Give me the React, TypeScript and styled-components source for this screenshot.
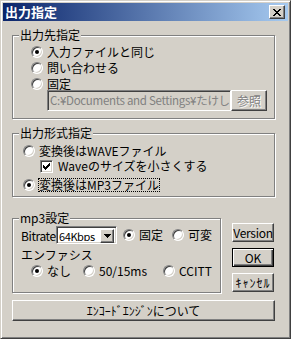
import React from 'react'
import styled, { createGlobalStyle, css } from 'styled-components'

const FACE = '#D4D0C8'

const GlobalStyle = createGlobalStyle`
  html, body {
    margin: 0;
    padding: 0;
    background: ${FACE};
  }
  body {
    font-family: 'Noto Sans CJK JP', 'Liberation Sans', sans-serif;
    font-size: 12px;
    color: #000;
  }
`

// raised / sunken bevels used by the classic controls
const raised = css`
  border: 1px solid;
  border-color: #fff #404040 #404040 #fff;
  box-shadow: inset -1px -1px #808080;
`

const sunken = css`
  border: 1px solid;
  border-color: #808080 #fff #fff #808080;
  box-shadow: inset 1px 1px #404040, inset -1px -1px ${FACE};
`

export default function App() {
  return (
    <>
      <GlobalStyle />
      <Window>
        <TitleBar>
          <TitleText>出力指定</TitleText>
          <CloseButton>
            <svg width='8' height='7' viewBox='0 0 8 7' shapeRendering='crispEdges'>
              <path
                fill='#000'
                d='M0 0h2v1H0z M6 0h2v1H6z M1 1h2v1H1z M5 1h2v1H5z M2 2h4v1H2z M3 3h2v1H3z M2 4h4v1H2z M1 5h2v1H1z M5 5h2v1H5z M0 6h2v1H0z M6 6h2v1H6z'
              />
            </svg>
          </CloseButton>
        </TitleBar>

        <Body>
          <Group $top={14} $pad='9px 0 7px 18px'>
            <Caption>出力先指定</Caption>
            <Radio checked>入力ファイルと同じ</Radio>
            <Radio $mt={2}>問い合わせる</Radio>
            <Radio $mt={2}>固定</Radio>
            <PathRow>
              <Edit>C:¥Documents and Settings¥たけし</Edit>
              <Button $w={36} $h={21} disabled>
                参照
              </Button>
            </PathRow>
          </Group>

          <Group $top={14} $pad='10px 0 4px 10px'>
            <Caption>出力形式指定</Caption>
            <Radio>変換後はWAVEファイル</Radio>
            <Check checked $mt={1} $ml={17}>
              Waveのサイズを小さくする
            </Check>
            <Radio checked $mt={5} focused>
              変換後はMP3ファイル
            </Radio>
          </Group>

          <Lower>
            <Group $top={0} $pad='7px 0 14px 8px' $w={209}>
              <Caption>mp3設定</Caption>
              <Line>
                <FieldLabel>Bitrate</FieldLabel>
                <Combo>
                  <ComboText>64Kbps</ComboText>
                  <ComboArrow>
                    <svg width='7' height='4' viewBox='0 0 7 4' shapeRendering='crispEdges'>
                      <path fill='#000' d='M0 0h7v1H0z M1 1h5v1H1z M2 2h3v1H2z M3 3h1v1H3z' />
                    </svg>
                  </ComboArrow>
                </Combo>
                <Radio checked $ml={6} $w={49}>
                  固定
                </Radio>
                <Radio>可変</Radio>
              </Line>
              <Plain $mt={4}>エンファシス</Plain>
              <Line $mt={2} $ml={10} $h={14}>
                <Radio checked $w={52}>
                  なし
                </Radio>
                <Radio $w={80}>50/15ms</Radio>
                <Radio>CCITT</Radio>
              </Line>
            </Group>

            <ButtonColumn>
              <Button $w={42} $h={19} $spacing={-0.3}>
                Version
              </Button>
              <Button $w={42} $h={19} $default>
                OK
              </Button>
              <Button $w={42} $h={19} $spacing={1}>
                ｷｬﾝｾﾙ
              </Button>
            </ButtonColumn>
          </Lower>

          <Button $w={263} $h={21} $mt={7}>
            ｴﾝｺｰﾄﾞｴﾝｼﾞﾝについて
          </Button>
        </Body>
      </Window>
    </>
  )
}

interface RadioProps {
  children: React.ReactNode
  checked?: boolean
  focused?: boolean
  $mt?: number
  $ml?: number
  $w?: number
}

function Radio({ children, checked, focused, $mt, $ml, $w }: RadioProps) {
  return (
    <Item $mt={$mt} $ml={$ml} $w={$w}>
      <RadioDot $on={checked} />
      {focused ? <Focus>{children}</Focus> : <span>{children}</span>}
    </Item>
  )
}

interface CheckProps {
  children: React.ReactNode
  checked?: boolean
  $mt?: number
  $ml?: number
}

function Check({ children, checked, $mt, $ml }: CheckProps) {
  return (
    <Item $mt={$mt} $ml={$ml} $gap={5}>
      <CheckBox>
        {checked && (
          <svg width='11' height='11' viewBox='0 0 11 11' shapeRendering='crispEdges'>
            <path
              fill='#000'
              d='M8 2h1v3H8z M7 3h1v3H7z M6 4h1v3H6z M5 5h1v3H5z M4 6h1v3H4z M3 5h1v3H3z M2 4h1v3H2z'
            />
          </svg>
        )}
      </CheckBox>
      <span>{children}</span>
    </Item>
  )
}

const Window = styled.div`
  width: 291px;
  height: 339px;
  box-sizing: border-box;
  padding: 2px;
  display: flex;
  flex-direction: column;
  background: ${FACE};
  border: 1px solid;
  border-color: ${FACE} #404040 #404040 ${FACE};
  box-shadow: inset 1px 1px #fff, inset -1px -1px #808080;
`

const TitleBar = styled.div`
  height: 18px;
  display: flex;
  align-items: center;
  padding: 0 3px 0 2px;
  background: linear-gradient(to right, #0a246a, #a6caf0);
`

const TitleText = styled.span`
  color: #fff;
  font-weight: bold;
  font-size: 13px;
  line-height: 18px;
`

const CloseButton = styled.div`
  ${raised};
  width: 16px;
  height: 14px;
  box-sizing: border-box;
  margin-left: auto;
  display: flex;
  align-items: center;
  justify-content: center;
  padding-right: 1px;
  background: ${FACE};
`

const Body = styled.div`
  display: flex;
  flex-direction: column;
  padding: 0 13px 0 9px;
`

const Group = styled.div<{ $top: number; $pad: string; $w?: number }>`
  position: relative;
  display: flex;
  flex-direction: column;
  margin-top: ${(p) => p.$top}px;
  padding: ${(p) => p.$pad};
  width: ${(p) => (p.$w ? `${p.$w}px` : 'auto')};
  box-sizing: border-box;
  border: 1px solid #808080;
  box-shadow: inset 1px 1px #fff, 1px 1px #fff;
`

const Caption = styled.span`
  position: absolute;
  top: -8px;
  left: 6px;
  padding: 0 1px;
  line-height: 14px;
  background: ${FACE};
`

const Item = styled.div<{ $mt?: number; $ml?: number; $w?: number; $gap?: number }>`
  display: flex;
  align-items: center;
  gap: ${(p) => p.$gap ?? 4}px;
  height: 14px;
  line-height: 14px;
  white-space: nowrap;
  margin-top: ${(p) => p.$mt ?? 0}px;
  margin-left: ${(p) => p.$ml ?? 0}px;
  width: ${(p) => (p.$w ? `${p.$w}px` : 'auto')};
  flex-shrink: 0;
`

const RadioDot = styled.span<{ $on?: boolean }>`
  ${sunken};
  width: 12px;
  height: 12px;
  box-sizing: border-box;
  border-radius: 50%;
  background: #fff;
  display: flex;
  align-items: center;
  justify-content: center;
  flex-shrink: 0;
  &::after {
    content: '';
    width: 4px;
    height: 4px;
    border-radius: 50%;
    background: ${(p) => (p.$on ? '#000' : 'transparent')};
  }
`

const CheckBox = styled.span`
  ${sunken};
  width: 13px;
  height: 13px;
  box-sizing: border-box;
  background: #fff;
  display: flex;
  flex-shrink: 0;
`

const Focus = styled.span`
  outline: 1px dotted #000;
  outline-offset: -1px;
  padding: 0 1px;
  margin-left: -1px;
`

const PathRow = styled.div`
  display: flex;
  margin: -1px 0 0 16px;
`

const Edit = styled.div`
  ${sunken};
  width: 184px;
  height: 21px;
  box-sizing: border-box;
  padding: 0 2px;
  font-size: 11.5px;
  letter-spacing: -0.3px;
  line-height: 19px;
  color: #808080;
  background: ${FACE};
  white-space: nowrap;
  overflow: hidden;
`

const Button = styled.button<{
  $w: number
  $h: number
  $mt?: number
  $default?: boolean
  $spacing?: number
}>`
  ${raised};
  width: ${(p) => p.$w}px;
  height: ${(p) => p.$h}px;
  margin: ${(p) => p.$mt ?? 0}px 0 0 0;
  padding: 0;
  box-sizing: border-box;
  display: flex;
  align-items: center;
  justify-content: center;
  font: inherit;
  line-height: 14px;
  letter-spacing: ${(p) => p.$spacing ?? 0}px;
  white-space: nowrap;
  color: #000;
  background: ${FACE};
  flex-shrink: 0;
  ${(p) =>
    p.$default &&
    css`
      border-color: #000;
      box-shadow: inset 1px 1px #fff, inset -1px -1px #404040, inset -2px -2px #808080;
    `}
  &:disabled {
    color: #808080;
    text-shadow: 1px 1px #fff;
  }
`

const Lower = styled.div`
  display: flex;
  align-items: flex-start;
  gap: 11px;
  margin-top: 21px;
`

const Line = styled.div<{ $mt?: number; $ml?: number; $h?: number }>`
  display: flex;
  align-items: center;
  height: ${(p) => p.$h ?? 18}px;
  margin-top: ${(p) => p.$mt ?? 0}px;
  margin-left: ${(p) => p.$ml ?? 0}px;
`

const FieldLabel = styled.span`
  width: 35px;
  flex-shrink: 0;
  letter-spacing: -0.4px;
  white-space: nowrap;
`

const Combo = styled.div`
  ${sunken};
  width: 61px;
  height: 18px;
  box-sizing: border-box;
  padding: 2px;
  display: flex;
  background: #fff;
  flex-shrink: 0;
`

const ComboText = styled.span`
  flex: 1;
  font-size: 11px;
  letter-spacing: -0.4px;
  line-height: 14px;
  white-space: nowrap;
  overflow: hidden;
`

const ComboArrow = styled.span`
  ${raised};
  width: 14px;
  height: 14px;
  box-sizing: border-box;
  display: flex;
  align-items: center;
  justify-content: center;
  background: ${FACE};
`

const Plain = styled.div<{ $mt?: number }>`
  height: 14px;
  line-height: 14px;
  margin-top: ${(p) => p.$mt ?? 0}px;
`

const ButtonColumn = styled.div`
  display: flex;
  flex-direction: column;
  gap: 6px;
  padding-top: 5px;
`
